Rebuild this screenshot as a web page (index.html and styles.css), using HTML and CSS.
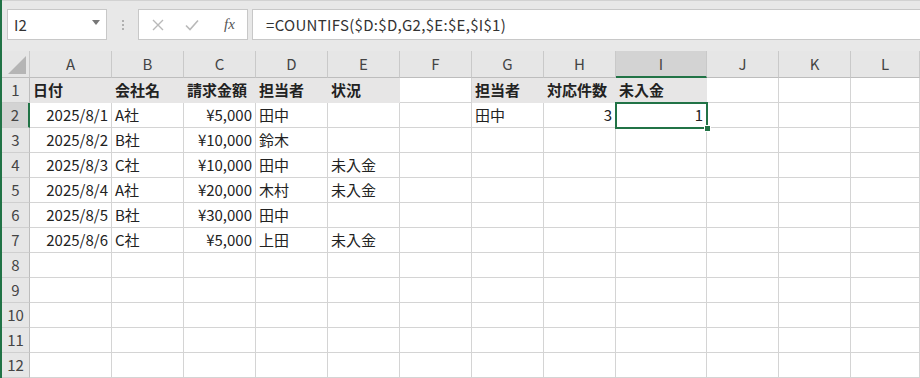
FILE: index.html
```html
<html>
<head>
  <meta charset="UTF-8">
  <title>Sheet</title>
  <link rel="stylesheet" href="styles.css">
</head>
<body>
<div class="app">
  <div class="toolbar">
    <div class="name-box">
      <span>I2</span>
      <svg class="drop" width="8" height="5" viewBox="0 0 8 5"><path d="M0 0H8L4 5Z" fill="#777"/></svg>
    </div>
    <div class="dots"><i></i><i></i><i></i></div>
    <div class="btn-box">
      <svg width="12" height="12" viewBox="0 0 12 12"><path d="M1 1L11 11M11 1L1 11" stroke="#b9b9b9" stroke-width="1.4"/></svg>
      <svg width="14" height="12" viewBox="0 0 14 12"><path d="M1 6.5L5 10.5L13 1.5" stroke="#b9b9b9" stroke-width="1.6" fill="none"/></svg>
      <span class="fx">fx</span>
    </div>
    <div class="formula">=COUNTIFS($D:$D,G2,$E:$E,$I$1)</div>
  </div>

  <div class="sheet">
    <div class="row head">
      <div class="corner"><svg width="18" height="18" viewBox="0 0 18 18"><path d="M18 0V18H0Z" fill="#b5b5b5"/></svg></div>
      <div>A</div><div>B</div><div>C</div><div>D</div><div>E</div><div>F</div><div>G</div><div>H</div><div class="sel">I</div><div>J</div><div>K</div><div>L</div>
    </div>

    <div class="row">
      <div class="rh">1</div>
      <div class="th">日付</div><div class="th">会社名</div><div class="th">請求金額</div><div class="th">担当者</div><div class="th">状況</div><div></div>
      <div class="th">担当者</div><div class="th">対応件数</div><div class="th">未入金</div><div></div><div></div><div></div>
    </div>
    <div class="row">
      <div class="rh sel">2</div>
      <div class="num">2025/8/1</div><div>A社</div><div class="num">¥5,000</div><div>田中</div><div></div><div></div>
      <div>田中</div><div class="num">3</div><div class="num active">1</div><div></div><div></div><div></div>
    </div>
    <div class="row">
      <div class="rh">3</div>
      <div class="num">2025/8/2</div><div>B社</div><div class="num">¥10,000</div><div>鈴木</div><div></div><div></div>
      <div></div><div></div><div></div><div></div><div></div><div></div>
    </div>
    <div class="row">
      <div class="rh">4</div>
      <div class="num">2025/8/3</div><div>C社</div><div class="num">¥10,000</div><div>田中</div><div>未入金</div><div></div>
      <div></div><div></div><div></div><div></div><div></div><div></div>
    </div>
    <div class="row">
      <div class="rh">5</div>
      <div class="num">2025/8/4</div><div>A社</div><div class="num">¥20,000</div><div>木村</div><div>未入金</div><div></div>
      <div></div><div></div><div></div><div></div><div></div><div></div>
    </div>
    <div class="row">
      <div class="rh">6</div>
      <div class="num">2025/8/5</div><div>B社</div><div class="num">¥30,000</div><div>田中</div><div></div><div></div>
      <div></div><div></div><div></div><div></div><div></div><div></div>
    </div>
    <div class="row">
      <div class="rh">7</div>
      <div class="num">2025/8/6</div><div>C社</div><div class="num">¥5,000</div><div>上田</div><div>未入金</div><div></div>
      <div></div><div></div><div></div><div></div><div></div><div></div>
    </div>
    <div class="row"><div class="rh">8</div><div></div><div></div><div></div><div></div><div></div><div></div><div></div><div></div><div></div><div></div><div></div><div></div></div>
    <div class="row"><div class="rh">9</div><div></div><div></div><div></div><div></div><div></div><div></div><div></div><div></div><div></div><div></div><div></div><div></div></div>
    <div class="row"><div class="rh">10</div><div></div><div></div><div></div><div></div><div></div><div></div><div></div><div></div><div></div><div></div><div></div><div></div></div>
    <div class="row"><div class="rh">11</div><div></div><div></div><div></div><div></div><div></div><div></div><div></div><div></div><div></div><div></div><div></div><div></div></div>
    <div class="row"><div class="rh">12</div><div></div><div></div><div></div><div></div><div></div><div></div><div></div><div></div><div></div><div></div><div></div><div></div></div>
  </div>
</div>
</body>
</html>
```

FILE: styles.css
```css
body {
  margin: 0;
  font-family: "Noto Sans CJK JP", "Noto Sans", sans-serif;
  color: #222;
  background: #fff;
  overflow: hidden;
}
.app {
  width: 920px;
  height: 378px;
  border-left: 2px solid #217346;
  box-sizing: border-box;
  overflow: hidden;
}
.toolbar {
  height: 51px;
  box-sizing: border-box;
  background: #e8e8e8;
  border-top: 1px solid #d2d2d2;
  display: flex;
  align-items: center;
  padding: 0 0 0 5px;
  padding-bottom: 3px;
}
.name-box {
  width: 100px;
  height: 31px;
  box-sizing: border-box;
  background: #fff;
  border: 1px solid #c8c8c8;
  display: flex;
  align-items: center;
  justify-content: space-between;
  padding: 0 6px 0 6px;
  font-size: 15px;
  color: #333;
}
.name-box .drop {
  margin-top: -4px;
}
.dots {
  width: 31px;
  display: flex;
  flex-direction: column;
  align-items: center;
  gap: 2px;
}
.dots i {
  width: 2px;
  height: 2px;
  background: #b0b0b0;
}
.btn-box {
  width: 110px;
  height: 31px;
  box-sizing: border-box;
  background: #fff;
  border: 1px solid #c8c8c8;
  display: flex;
  align-items: center;
  padding: 0 10px 0 13px;
  gap: 21px;
}
.fx {
  font-family: "Liberation Serif", serif;
  font-style: italic;
  font-size: 15px;
  color: #555;
  margin-left: 4px;
}
.formula {
  flex: 1;
  margin-left: 4px;
  height: 31px;
  box-sizing: border-box;
  background: #fff;
  border: 1px solid #c8c8c8;
  border-right: none;
  padding-left: 13px;
  font-size: 15px;
  letter-spacing: 0.3px;
  line-height: 29px;
  color: #333;
}
.row {
  display: grid;
  grid-template-columns: 28px 82px repeat(7, 72px) 91px 72px 72px 1fr;
  height: 25px;
}
.row > div {
  border-right: 1px solid #d4d4d4;
  border-bottom: 1px solid #d4d4d4;
  box-sizing: border-box;
  font-size: 15px;
  line-height: 24px;
  padding: 0 3px;
  white-space: nowrap;
  overflow: hidden;
}
.row.head {
  height: 27px;
  background: #e6e6e6;
}
.row.head > div {
  text-align: center;
  color: #444;
  line-height: 26px;
  border-right-color: #c9c9c9;
  border-bottom-color: #bdbdbd;
}
.row.head .corner {
  display: flex;
  align-items: flex-end;
  justify-content: flex-end;
  padding: 0 3px 3px 0;
}
.row.head .sel {
  background: #d3d3d3;
  border-bottom: 2px solid #217346;
}
.row .rh {
  background: #e6e6e6;
  text-align: center;
  padding: 0;
  color: #444;
  border-right-color: #bdbdbd;
  border-bottom-color: #cfcfcf;
}
.row .rh.sel {
  background: #d3d3d3;
  border-right: 2px solid #217346;
}
.row .th {
  background: #e7e6e6;
  border-color: #e7e6e6;
  font-weight: bold;
}
.row .num {
  text-align: right;
}
.row .active {
  position: relative;
  overflow: visible;
  outline: 2px solid #217346;
  outline-offset: -1px;
  z-index: 1;
}
.active::after {
  content: "";
  position: absolute;
  right: -5px;
  bottom: -5px;
  width: 5px;
  height: 5px;
  background: #217346;
  border: 1px solid #fff;
}
```
